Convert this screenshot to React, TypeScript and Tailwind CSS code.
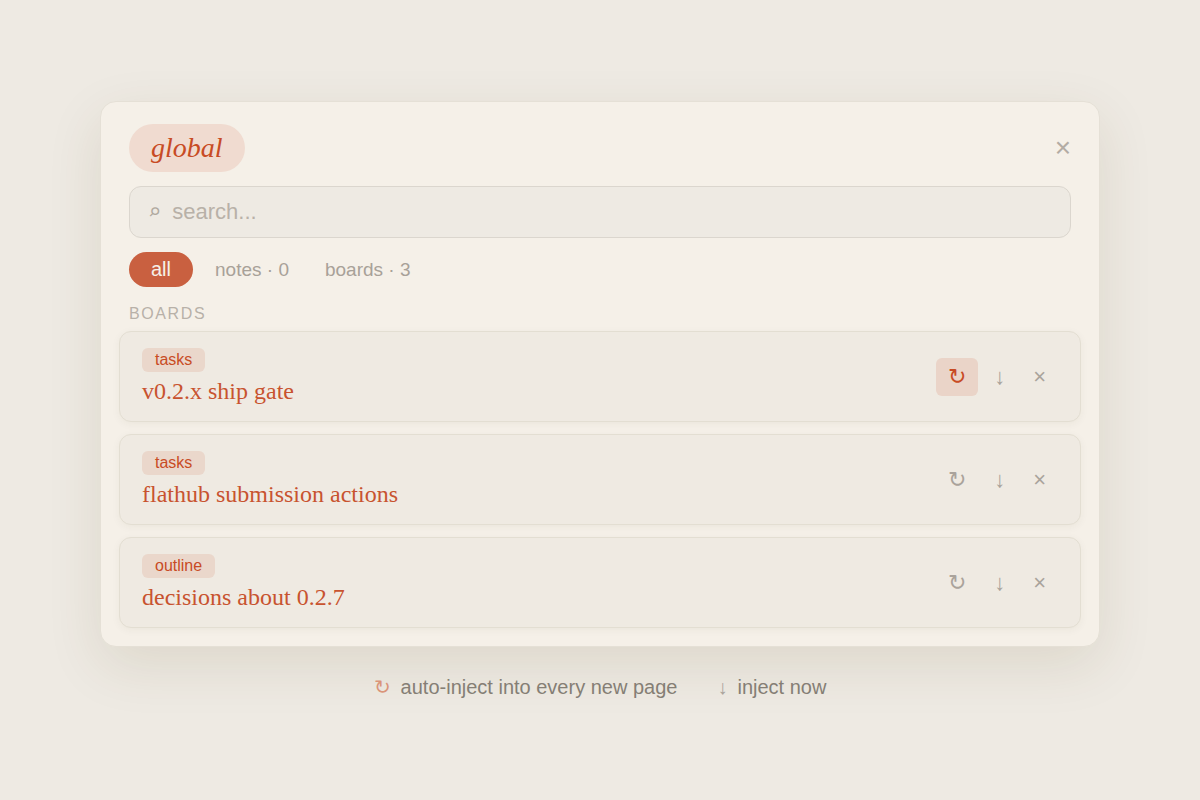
import React, { useState } from 'react';
import clsx from 'clsx';

const boards = [
  { kind: 'tasks', title: 'v0.2.x ship gate', auto: true },
  { kind: 'tasks', title: 'flathub submission actions', auto: false },
  { kind: 'outline', title: 'decisions about 0.2.7', auto: false },
];

const filters = [
  { id: 'all', label: 'all' },
  { id: 'notes', label: 'notes · 0' },
  { id: 'boards', label: 'boards · 3' },
];

function BoardCard({ kind, title, auto }: { kind: string; title: string; auto: boolean }) {
  return (
    <li className="flex items-center justify-between rounded-xl border border-[#e3ded2] bg-[#efeae2] px-[22px] py-4 shadow-[0_2px_8px_rgba(60,50,20,0.05)]">
      <div className="flex flex-col items-start gap-1.5">
        <span className="rounded-md bg-[#ead7cb] px-[13px] text-base leading-6 text-[#c84b24]">{kind}</span>
        <h3 className="font-['Liberation_Serif',serif] text-2xl leading-[27px] text-[#c8532f]">{title}</h3>
      </div>
      <div className="flex items-center gap-1 text-[22px] leading-[26px] text-[#aaa39b]">
        <button
          aria-label="auto-inject"
          aria-pressed={auto}
          className={clsx('rounded-md px-3 py-1.5', auto && 'bg-[#ead4c8] text-[#c84b24]')}
        >
          ↻
        </button>
        <button aria-label="inject now" className="rounded-md px-3 py-1.5">↓</button>
        <button aria-label="remove" className="rounded-md px-3 py-1.5">×</button>
      </div>
    </li>
  );
}

export default function App() {
  const [filter, setFilter] = useState('all');

  return (
    <div className="flex min-h-screen flex-col items-center justify-center gap-[29px] bg-[#eeeae3] px-[100px] font-['Liberation_Sans',sans-serif]">
      {/* Panel */}
      <main className="flex w-full max-w-[1000px] flex-col rounded-2xl border border-[#e5e0d6] bg-[#f5f0e8] px-7 pt-[22px] pb-[18px] shadow-[0_18px_56px_rgba(80,65,10,0.11)]">
        <header className="flex items-center justify-between">
          <h1 className="rounded-full bg-[#f0dbd0] px-[22px] py-2 font-['Liberation_Serif',serif] text-[28px] leading-8 text-[#c84b24] italic">
            global
          </h1>
          <button aria-label="close" className="text-[28px] leading-8 text-[#b3aca4]">×</button>
        </header>

        <label className="mt-3.5 flex items-center gap-[11px] rounded-xl border border-[#dbd6ce] bg-[#eeeae3] px-[18px] py-3 text-[22px] leading-[26px] text-[#b8b1a8]">
          <span className="font-['DejaVu_Sans_Mono',monospace] text-[#b0a99f]">⌕</span>
          <input
            type="text"
            aria-label="search"
            placeholder="search..."
            className="w-full bg-transparent outline-none placeholder:text-[#b8b1a8]"
          />
        </label>

        {/* Filters */}
        <div className="mt-3.5 flex items-center gap-2">
          {filters.map((f) => (
            <button
              key={f.id}
              onClick={() => setFilter(f.id)}
              className={clsx(
                'rounded-full py-1.5 leading-[23px]',
                filter === f.id ? 'bg-[#c96040] px-[22px] text-xl text-[#f5f0e8]' : 'px-3.5 text-[19px] text-[#a8a198]'
              )}
            >
              {f.label}
            </button>
          ))}
        </div>

        {/* Boards */}
        <h2 className="mt-[18px] text-base leading-[18px] tracking-widest text-[#b8b1a8] uppercase">Boards</h2>
        <ul className="-mx-2.5 mt-2 flex flex-col gap-3">
          {boards.map((b) => (
            <BoardCard key={b.title} {...b} />
          ))}
        </ul>
      </main>

      {/* Legend */}
      <footer className="flex gap-10 text-xl leading-[23px] text-[#857e75]">
        <p className="flex gap-2.5">
          <span className="text-[#da9479]">↻</span>
          auto-inject into every new page
        </p>
        <p className="flex gap-2.5">
          <span className="text-[#aaa39b]">↓</span>
          inject now
        </p>
      </footer>
    </div>
  );
}
